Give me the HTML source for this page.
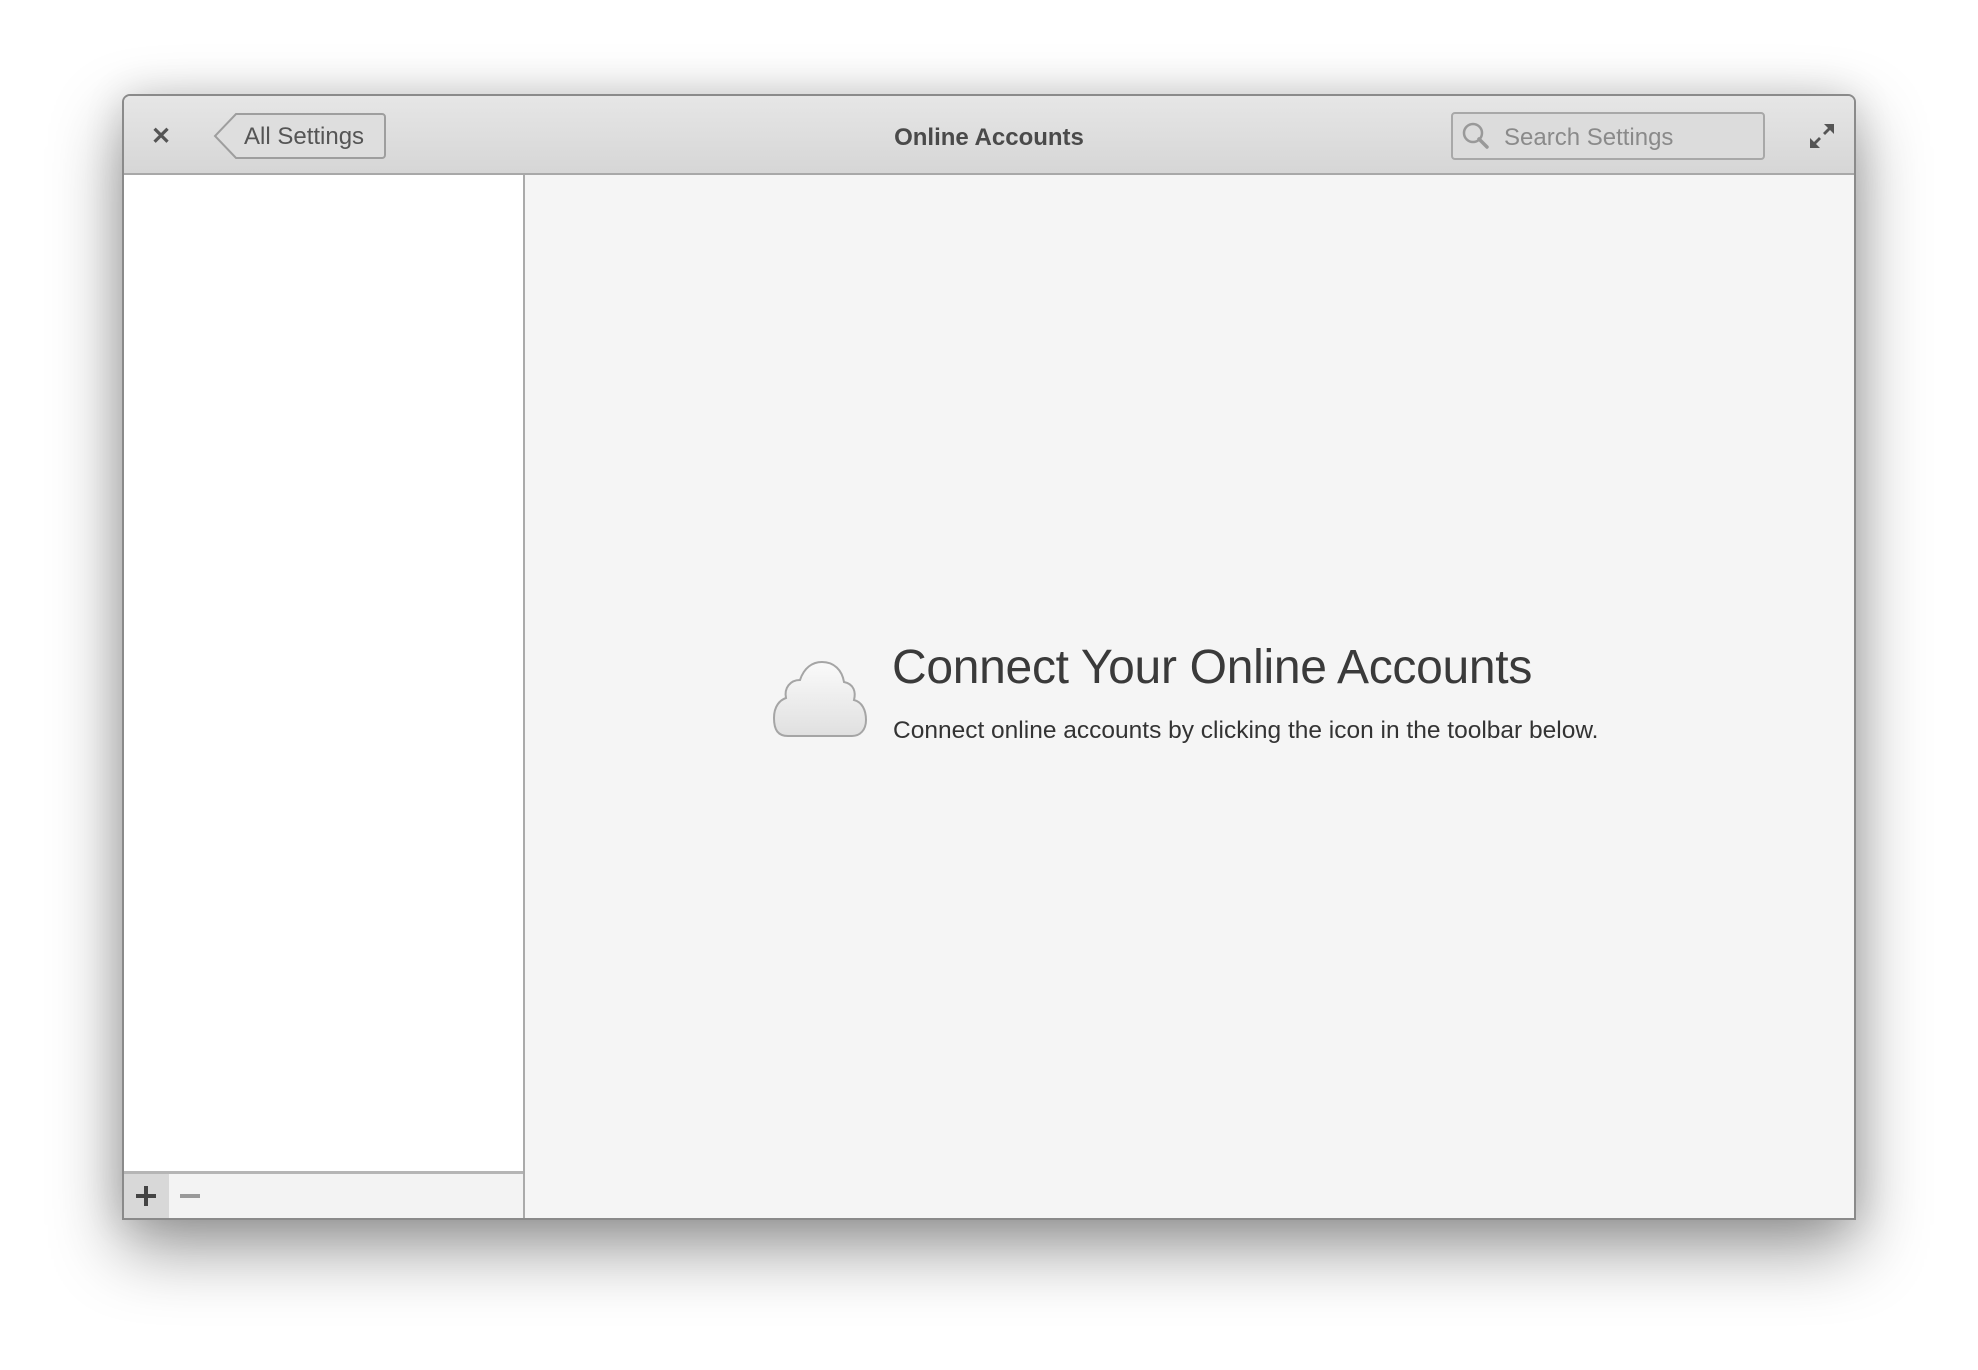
<!DOCTYPE html>
<html><head><meta charset="utf-8"><style>
body{margin:0;width:1978px;height:1370px;background:#fff;position:relative;overflow:hidden;font-family:"Liberation Sans",sans-serif}
.win{position:absolute;left:122px;top:94px;width:1734px;height:1126px;box-sizing:border-box;border:2px solid #8a8a8a;border-radius:8px 8px 0 0;background:#f5f5f5;box-shadow:0 28px 70px rgba(0,0,0,.42),0 0 40px rgba(0,0,0,.12);overflow:hidden}
.hdr{position:absolute;left:0;top:0;right:0;height:77px;background:linear-gradient(#e6e6e6,#d6d6d6);border-bottom:2px solid #a8a8a8}
.side{position:absolute;left:0;top:79px;width:399px;bottom:0;background:#fff;border-right:2px solid #aaa}
.tb{position:absolute;left:0;bottom:0;width:399px;height:44px;background:#f3f3f3;border-top:3px solid #b5b5b5}
.plus{position:absolute;left:0;top:0;width:45px;height:44px;background:#d8d8d8}
</style></head><body>
<div class="win">
 <div class="hdr">
  <div style="position:absolute;left:27px;top:31px;font-size:24px;font-weight:bold;color:#555;line-height:20px">✕</div>
  <svg style="position:absolute;left:88px;top:16px" width="176" height="50"><path d="M24 2H170a3 3 0 0 1 3 3V43a3 3 0 0 1-3 3H24L3 24Z" fill="#dedede" stroke="#9e9e9e" stroke-width="2"/></svg>
  <div style="position:absolute;left:120px;top:27px;font-size:24px;color:#555">All Settings</div>
  <div style="position:absolute;left:0;right:0;top:28px;text-align:center;font-size:24px;font-weight:bold;color:#4a4a4a">Online Accounts</div>
  <div style="position:absolute;left:1327px;top:16px;width:314px;height:48px;box-sizing:border-box;border:2px solid #a8a8a8;border-radius:4px;background:#dcdcdc"></div>
  <svg style="position:absolute;left:1337px;top:25px" width="32" height="32"><circle cx="12" cy="12" r="9" fill="none" stroke="#999" stroke-width="2.5"/><path d="M18 18L26 26" stroke="#999" stroke-width="3.5" stroke-linecap="round"/></svg>
  <div style="position:absolute;left:1380px;top:28px;font-size:24px;color:#8a8a8a">Search Settings</div>
  <svg style="position:absolute;left:1684px;top:26px" width="28" height="28"><path d="M16 2H26V12L22 8L17 13L15 11L20 6Z M2 26V16L6 20L11 15L13 17L8 22L12 26Z" fill="#555"/></svg>
 </div>
 <div class="side"><div class="tb"><div class="plus"></div>
  <div style="position:absolute;left:12px;top:20px;width:20px;height:4px;background:#444"></div>
  <div style="position:absolute;left:20px;top:12px;width:4px;height:20px;background:#444"></div>
  <div style="position:absolute;left:56px;top:20px;width:20px;height:4px;background:#999"></div>
 </div></div>
 <svg style="position:absolute;left:648px;top:560px" width="100" height="85"><defs><linearGradient id="g" x1="0" y1="0" x2="0" y2="1"><stop offset="0" stop-color="#fafafa"/><stop offset="1" stop-color="#e0e0e0"/></linearGradient></defs><path d="M16 80C6 80 2 74 2 62C2 50 8 44 14 42C12 32 18 24 28 24C32 12 40 6 50 6C62 6 70 14 72 26C82 28 84 36 82 44C90 46 94 54 94 64C94 74 88 80 80 80Z" fill="url(#g)" stroke="#a5a5a5" stroke-width="2"/></svg>
 <div style="position:absolute;left:768px;top:544px;font-size:48px;color:#3a3a3a;white-space:nowrap;letter-spacing:-0.3px">Connect Your Online Accounts</div>
 <div style="position:absolute;left:769px;top:621px;font-size:24.5px;color:#333;white-space:nowrap">Connect online accounts by clicking the icon in the toolbar below.</div>
</div>
</body></html>
